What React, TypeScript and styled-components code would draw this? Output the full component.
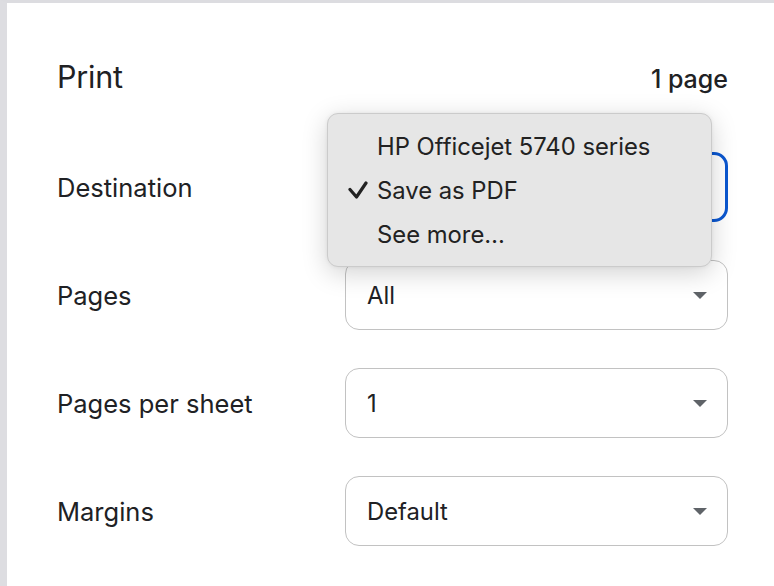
import styled, { createGlobalStyle } from "styled-components";

const GlobalStyle = createGlobalStyle`
  html, body {
    margin: 0;
    padding: 0;
    background: #ffffff;
  }
  body {
    font-family: Inter, "Noto Sans", "Liberation Sans", sans-serif;
    color: #202124;
    -webkit-font-smoothing: antialiased;
  }
`;

// 上と左の灰色の帯はウィンドウの縁
const Frame = styled.div`
  width: 774px;
  height: 586px;
  box-sizing: border-box;
  border-top: 3px solid #dcdce0;
  border-left: 7px solid #dddde1;
  overflow: hidden;
`;

const Panel = styled.div`
  padding: 55px 46px 0 50px;
`;

const Header = styled.header`
  display: flex;
  justify-content: space-between;
  align-items: baseline;
  height: 66px;
`;

const Title = styled.h1`
  margin: 0;
  font-size: 30.5px;
  font-weight: 400;
  letter-spacing: -0.2px;
`;

const PageCount = styled.span`
  font-size: 25px;
  font-weight: 500;
`;

const Rows = styled.div`
  display: grid;
  grid-template-columns: 288px 1fr;
  grid-auto-rows: 70px;
  row-gap: 38px;
  align-items: center;
  margin-top: 28px;
`;

const Label = styled.div`
  font-size: 25.5px;
`;

const SelectBox = styled.div<{ $focused?: boolean }>`
  position: relative;
  height: 70px;
  box-sizing: border-box;
  border-radius: 14px;
  border: ${(p) => (p.$focused ? "3px solid #0b57d0" : "1.6px solid #c2c2c2")};
  display: flex;
  align-items: center;
  justify-content: space-between;
  padding: 0 20px 0 ${(p) => (p.$focused ? "20px" : "21px")};
  font-size: 23.8px;
`;

const Caret = styled.span`
  width: 0;
  height: 0;
  margin-left: auto;
  border-left: 7px solid transparent;
  border-right: 7px solid transparent;
  border-top: 7px solid #5f6368;
  margin-top: 1px;
`;

const Menu = styled.ul`
  position: absolute;
  left: -21px;
  top: -42px;
  width: 385px;
  height: 154px;
  box-sizing: border-box;
  margin: 0;
  padding: 10px 0 0;
  list-style: none;
  background: #e6e6e6;
  border: 1px solid #cbcbcb;
  border-radius: 11px;
  box-shadow: 0 6px 26px rgba(0, 0, 0, 0.18), 0 0 4px rgba(0, 0, 0, 0.06);
  z-index: 2;
`;

const MenuItem = styled.li`
  display: flex;
  align-items: center;
  height: 44px;
  padding-left: 20px;
  font-size: 23.8px;
  color: #222222;
`;

const CheckSlot = styled.span`
  width: 29px;
  display: flex;
  align-items: center;
`;

const Check = () => (
  <svg width="20" height="18" viewBox="0 0 20 18">
    <polyline
      points="2,8.5 8.5,16 18,2"
      fill="none"
      stroke="#222"
      strokeWidth="3.2"
      strokeLinecap="round"
      strokeLinejoin="round"
    />
  </svg>
);

const App = () => {
  const destinations = [
    { name: "HP Officejet 5740 series", checked: false },
    { name: "Save as PDF", checked: true },
    { name: "See more…", checked: false },
  ];

  const settings = [
    ["Pages", "All"],
    ["Pages per sheet", "1"],
    ["Margins", "Default"],
  ];

  return (
    <>
      <GlobalStyle />
      <Frame>
        <Panel>
          <Header>
            <Title>Print</Title>
            <PageCount>1 page</PageCount>
          </Header>
          <Rows>
            <Label>Destination</Label>
            {/* 選択中の値はメニューに隠れているので表示しない */}
            <SelectBox $focused>
              <Caret />
              <Menu>
                {destinations.map((d) => (
                  <MenuItem key={d.name}>
                    <CheckSlot>{d.checked && <Check />}</CheckSlot>
                    {d.name}
                  </MenuItem>
                ))}
              </Menu>
            </SelectBox>
            {settings.map(([label, value]) => [
              <Label key={label}>{label}</Label>,
              <SelectBox key={label + "-box"}>
                {value}
                <Caret />
              </SelectBox>,
            ])}
          </Rows>
        </Panel>
      </Frame>
    </>
  );
};

export default App;
